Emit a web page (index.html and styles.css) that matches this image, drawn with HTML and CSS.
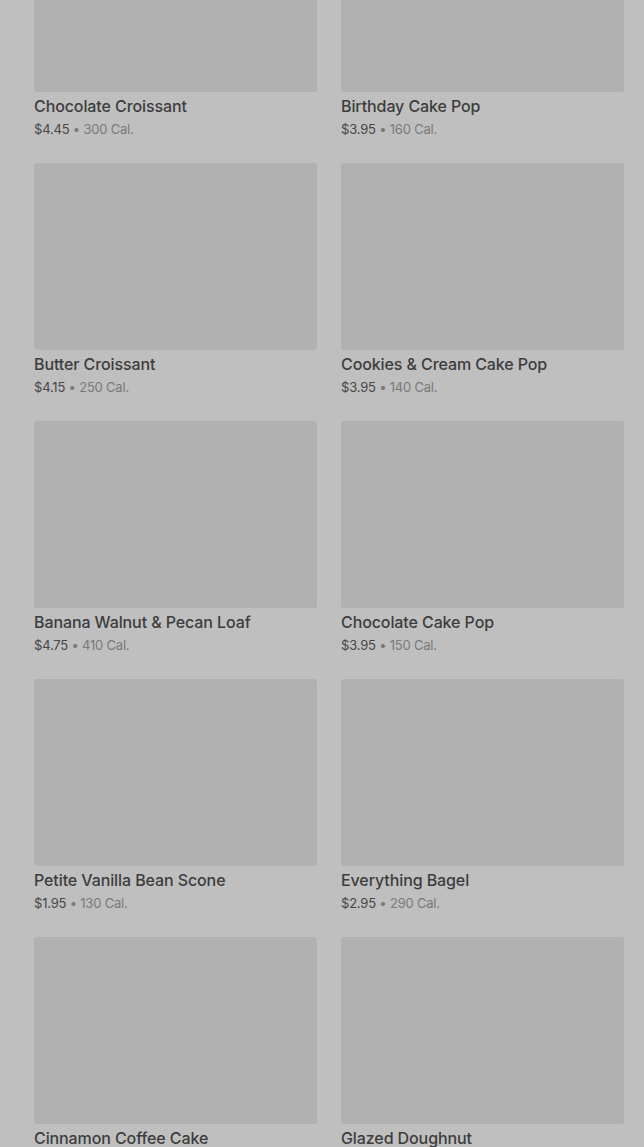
FILE: index.html
```html
<!DOCTYPE html>
<html lang="en">
<head>
    <meta charset="UTF-8">
    <title>Bakery</title>
    <link rel="stylesheet" href="styles.css">
</head>
<body>
    <div class="grid">
        <div class="card"><div class="pic"></div><h3>Chocolate Croissant</h3><p><span class="price">$4.45</span> • 300 Cal.</p></div>
        <div class="card"><div class="pic"></div><h3>Birthday Cake Pop</h3><p><span class="price">$3.95</span> • 160 Cal.</p></div>
        <div class="card"><div class="pic"></div><h3>Butter Croissant</h3><p><span class="price">$4.15</span> • 250 Cal.</p></div>
        <div class="card"><div class="pic"></div><h3>Cookies &amp; Cream Cake Pop</h3><p><span class="price">$3.95</span> • 140 Cal.</p></div>
        <div class="card"><div class="pic"></div><h3>Banana Walnut &amp; Pecan Loaf</h3><p><span class="price">$4.75</span> • 410 Cal.</p></div>
        <div class="card"><div class="pic"></div><h3>Chocolate Cake Pop</h3><p><span class="price">$3.95</span> • 150 Cal.</p></div>
        <div class="card"><div class="pic"></div><h3>Petite Vanilla Bean Scone</h3><p><span class="price">$1.95</span> • 130 Cal.</p></div>
        <div class="card"><div class="pic"></div><h3>Everything Bagel</h3><p><span class="price">$2.95</span> • 290 Cal.</p></div>
        <div class="card"><div class="pic"></div><h3>Cinnamon Coffee Cake</h3><p><span class="price">$2.95</span> • 330 Cal.</p></div>
        <div class="card"><div class="pic"></div><h3>Glazed Doughnut</h3><p><span class="price">$2.45</span> • 480 Cal.</p></div>
    </div>
</body>
</html>
```
FILE: styles.css
```css
*{margin:0;padding:0;box-sizing:border-box;}
html,body{background:#bfbfbf;}
body{font-family:"Inter","Liberation Sans",sans-serif;overflow:hidden;}
.grid{display:grid;grid-template-columns:283px 283px;column-gap:24px;row-gap:23px;padding:0 20px 0 34px;margin-top:-95px;}
.pic{height:187px;background:#b1b1b1;border-radius:3px;}
.card h3{margin-top:3px;font-size:16px;line-height:22px;font-weight:500;color:#3d3d3d;letter-spacing:-0.1px;}
.card p{padding-top:2px;font-size:13px;line-height:21px;color:#7a7a7a;letter-spacing:-0.2px;}
.price{color:#474747;}
```
